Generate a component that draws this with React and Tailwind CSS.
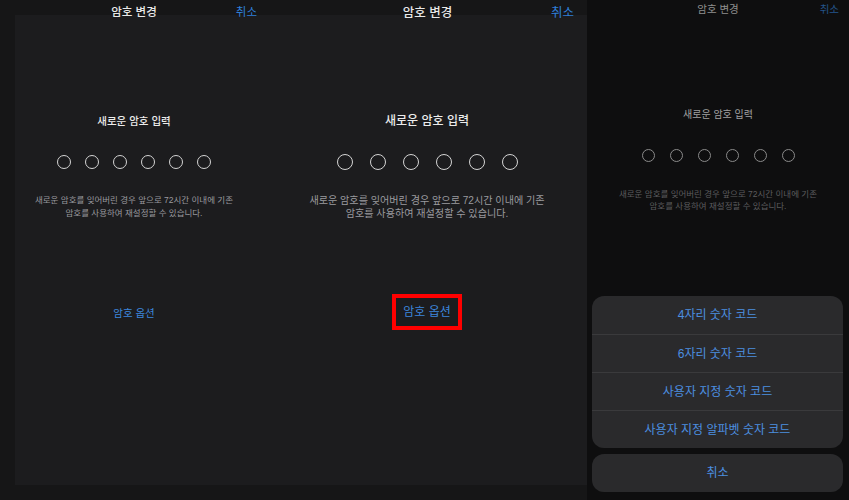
const FONT = "font-['Liberation_Sans','Noto_Sans_CJK_KR',sans-serif]";

const Dots = ({ size, gap, color }) => (
  <div className={`flex justify-center ${gap}`}>
    {[0, 1, 2, 3, 4, 5].map((i) => (
      <div key={i} className={`${size} rounded-full border-[1.5px] ${color}`} />
    ))}
  </div>
);

const NavBar = ({ width, pr, title, cancel }) => (
  <div className={`${width} grid grid-cols-[1fr_auto_1fr] items-center`}>
    <div />
    <div className={title}>암호 변경</div>
    <div className={`justify-self-end ${pr} ${cancel}`}>취소</div>
  </div>
);

const OPTIONS = ["4자리 숫자 코드", "6자리 숫자 코드", "사용자 지정 숫자 코드", "사용자 지정 알파벳 숫자 코드"];

export default function App() {
  return (
    <div className={`flex w-[849px] h-[500px] overflow-hidden bg-[#161617] ${FONT}`}>
      {/* Left: two passcode screens side by side */}
      <div className="w-[587px] flex flex-col">
        <div className="relative z-10 flex h-[26px]">
          <NavBar
            width="w-[268px]"
            pr="pr-[11px]"
            title="text-[11.5px] font-medium text-[#e8e8e8]"
            cancel="text-[11.5px] text-[#2f7fd8]"
          />
          <NavBar
            width="w-[319px]"
            pr="pr-[13px]"
            title="text-[12.5px] font-medium text-[#e8e8e8]"
            cancel="text-[12.5px] text-[#2f7fd8]"
          />
        </div>
        <div className="-mt-[11px] ml-[15px] h-[470px] bg-[#1c1c1e] flex">
          {/* Column 1 */}
          <div className="w-[238px] flex flex-col items-center pt-[98px]">
            <div className="text-[10.5px] leading-[16px] font-medium text-[#ececec]">새로운 암호 입력</div>
            <div className="mt-[26px]">
              <Dots size="w-[14px] h-[14px]" gap="gap-[14px]" color="border-[#d4d4d4]" />
            </div>
            <div className="mt-[25px] text-center text-[8.5px] leading-[13px] text-[#9a9a9e]">
              새로운 암호를 잊어버린 경우 앞으로 72시간 이내에 기존
              <br />
              암호를 사용하여 재설정할 수 있습니다.
            </div>
            <div className="mt-[85px] text-[10.5px] leading-[16px] text-[#3d86dc]">암호 옵션</div>
          </div>
          {/* Column 2 */}
          <div className="flex-1 pl-[14px] flex flex-col items-center pt-[97px]">
            <div className="text-[12px] leading-[18px] font-medium text-[#ececec]">새로운 암호 입력</div>
            <div className="mt-[24px]">
              <Dots size="w-[16px] h-[16px]" gap="gap-[17px]" color="border-[#d4d4d4]" />
            </div>
            <div className="mt-[24px] text-center text-[10.1px] leading-[13px] text-[#9a9a9e]">
              새로운 암호를 잊어버린 경우 앞으로 72시간 이내에 기존
              <br />
              암호를 사용하여 재설정할 수 있습니다.
            </div>
            <div className="mt-[74px] border-4 border-[#ff0000] px-[7px] py-[6px] text-[12px] leading-[16px] text-[#3d86dc]">
              암호 옵션
            </div>
          </div>
        </div>
      </div>

      {/* Right: dimmed screen with action sheet */}
      <div className="flex-1 bg-[#0e0e0f] flex flex-col">
        <NavBar
          width="w-full h-[20px]"
          pr="pr-[10px]"
          title="text-[10.5px] text-[#8e8e8e]"
          cancel="text-[10.5px] text-[#24558c]"
        />
        <div className="flex flex-col items-center pt-[88px]">
          <div className="text-[10px] leading-[14px] text-[#a0a0a0]">새로운 암호 입력</div>
          <div className="mt-[27px]">
            <Dots size="w-[13px] h-[13px]" gap="gap-[15px]" color="border-[#8a8a8a]" />
          </div>
          <div className="mt-[26px] text-center text-[8.5px] leading-[12px] text-[#5c5c5e]">
            새로운 암호를 잊어버린 경우 앞으로 72시간 이내에 기존
            <br />
            암호를 사용하여 재설정할 수 있습니다.
          </div>
        </div>
        <div className="mt-[84px] ml-[5px] mr-[6px]">
          <div className="rounded-[12px] bg-[#2a2a2c] overflow-hidden">
            {OPTIONS.map((label, i) => (
              <div
                key={label}
                className={`h-[38px] flex items-center justify-center text-[12px] text-[#4c8fe0] ${
                  i > 0 ? "border-t border-[#3a3a3c]" : ""
                }`}
              >
                {label}
              </div>
            ))}
          </div>
          <div className="mt-[6px] h-[38px] rounded-[12px] bg-[#2a2a2c] flex items-center justify-center text-[12px] text-[#4c8fe0]">
            취소
          </div>
        </div>
      </div>
    </div>
  );
}
